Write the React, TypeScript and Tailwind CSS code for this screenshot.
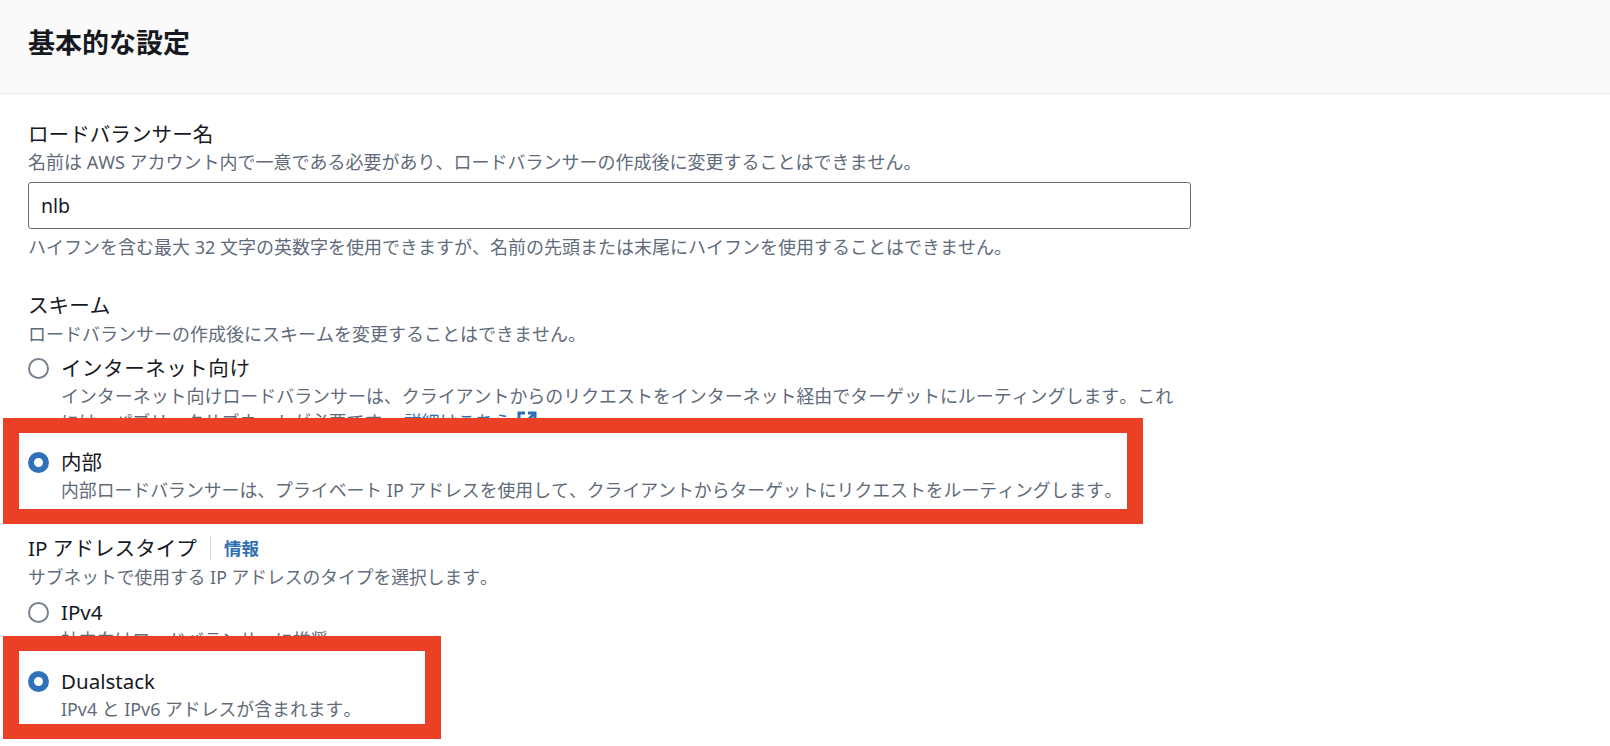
const font = "font-['Noto_Sans','Noto_Sans_CJK_JP',sans-serif] [font-kerning:none]";

const Radio = ({ checked = false }: { checked?: boolean }) =>
  checked ? (
    <span className="mt-[4px] block h-[21px] w-[21px] shrink-0 rounded-full border-[6px] border-[#3072b8] bg-white" />
  ) : (
    <span className="mt-[4px] block h-[21px] w-[21px] shrink-0 rounded-full border-2 border-[#79838f] bg-white" />
  );

type OptionProps = {
  label: React.ReactNode;
  checked?: boolean;
  children: React.ReactNode;
};

const Option = ({ label, checked, children }: OptionProps) => (
  <div className="flex gap-[12px]">
    <Radio checked={checked} />
    <div className="min-w-0 flex-1">
      <div className="text-[20.5px] leading-[28px] text-[#16191f]">{label}</div>
      <div className="mt-[1px] text-[17.85px] leading-[26px] text-[#5f6b7a]">{children}</div>
    </div>
  </div>
);

const LinkIcon = () => (
  <svg viewBox="0 0 22 22" className="ml-[5px] inline h-[22px] w-[22px] align-[-3px]" fill="none" stroke="currentColor" strokeWidth="3">
    <path d="M9 3H3v16h16v-6" />
    <path d="M12 3h7v7" />
    <path d="M19 3 10 12" />
  </svg>
);

export default function App() {
  return (
    <div className={`relative h-[746px] w-[1610px] overflow-hidden bg-white ${font}`}>
      <header className="flex h-[94px] items-start border-b border-[#eaeded] bg-[#fafafa] px-[28px] pt-[24px]">
        <h2 className="text-[27px] font-bold leading-[38px] text-[#16191f]">基本的な設定</h2>
      </header>

      <div className="flex w-[1191px] flex-col pl-[28px] pt-[25px]">
        <label className="text-[20.6px] leading-[30px] text-[#16191f]">ロードバランサー名</label>
        <p className="text-[18px] leading-[26px] text-[#5f6b7a]">
          名前は AWS アカウント内で一意である必要があり、ロードバランサーの作成後に変更することはできません。
        </p>
        <div className="mt-[7px] flex h-[47px] items-center rounded-[3px] border border-[#687078] px-[12px] text-[19.5px] text-[#16191f]">
          nlb
        </div>
        <p className="mt-[5px] text-[18px] leading-[26px] text-[#5f6b7a]">
          ハイフンを含む最大 32 文字の英数字を使用できますが、名前の先頭または末尾にハイフンを使用することはできません。
        </p>

        <label className="mt-[30px] text-[20.6px] leading-[30px] text-[#16191f]">スキーム</label>
        <p className="mt-[1px] text-[18px] leading-[26px] text-[#5f6b7a]">
          ロードバランサーの作成後にスキームを変更することはできません。
        </p>

        <div className="mt-[7px] flex flex-col gap-[13px]">
          <Option label={<span className="tracking-[0.55px]">インターネット向け</span>}>
            <span className="text-[17.95px]">
              インターネット向けロードバランサーは、クライアントからのリクエストをインターネット経由でターゲットにルーティングします。これ
            </span>
            <br />
            には、パブリックサブネットが必要です。
            <a className="ml-[4px] text-[#2f6fb3]">
              詳細はこちら
              <LinkIcon />
            </a>
          </Option>
          <Option label="内部" checked>
            内部ロードバランサーは、プライベート IP アドレスを使用して、クライアントからターゲットにリクエストをルーティングします。
          </Option>
        </div>

        <div className="mt-[30px] flex items-center">
          <label className="text-[20.6px] leading-[30px] text-[#16191f]">IP アドレスタイプ</label>
          <span className="ml-[13px] mr-[13px] h-[24px] w-px bg-[#d5dbdb]" />
          <a className="text-[17.5px] font-bold leading-[30px] text-[#2f6fb3]">情報</a>
        </div>
        <p className="mt-[1px] text-[17.75px] leading-[26px] text-[#5f6b7a]">
          サブネットで使用する IP アドレスのタイプを選択します。
        </p>
        <div className="mt-[8px] flex flex-col gap-[14px]">
          <Option label="IPv4">社内向けロードバランサーに推奨</Option>
          <Option label="Dualstack" checked>
            IPv4 と IPv6 アドレスが含まれます。
          </Option>
        </div>
      </div>

      {/* red annotation boxes drawn over the screenshot */}
      <div className="pointer-events-none absolute left-[3px] top-[418px] h-[106px] w-[1140px] border-x-[16px] border-y-[15px] border-[#ea4025]" />
      <div className="pointer-events-none absolute left-[3px] top-[636px] h-[103px] w-[438px] border-x-[16px] border-y-[15px] border-[#ea4025]" />
    </div>
  );
}
